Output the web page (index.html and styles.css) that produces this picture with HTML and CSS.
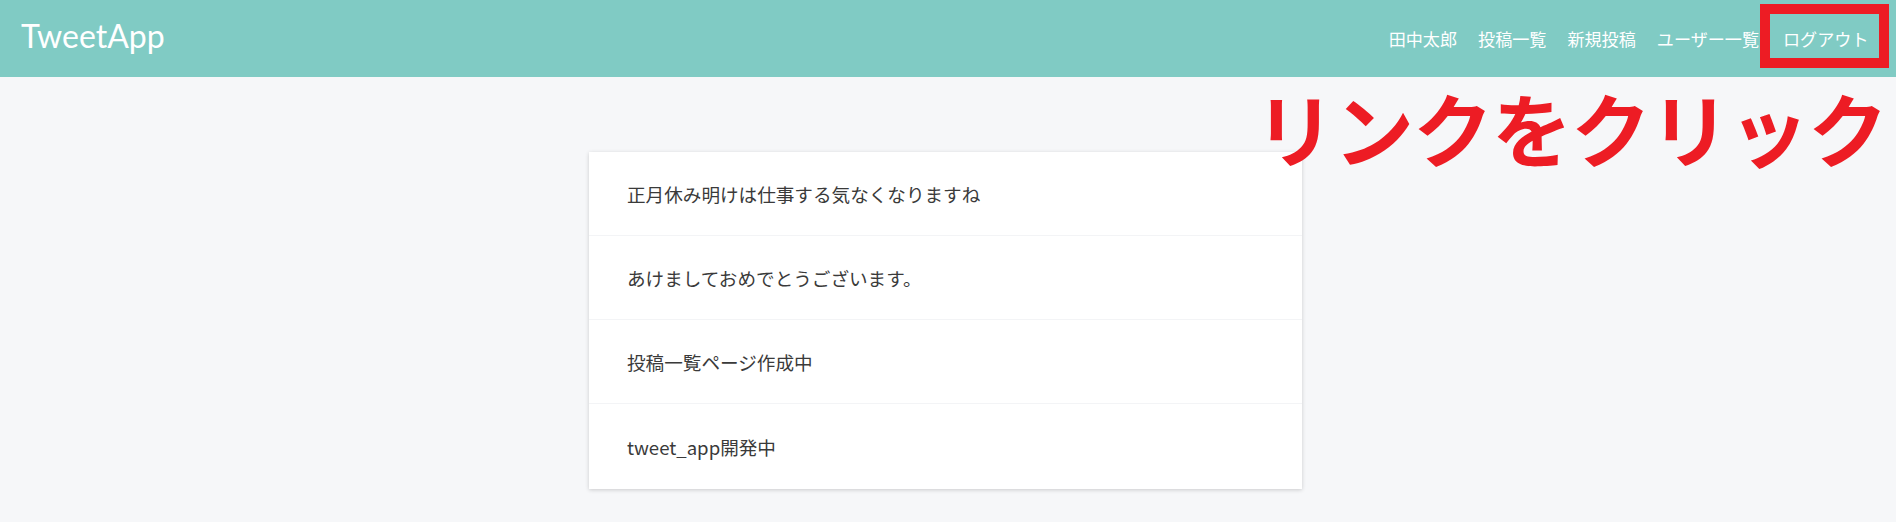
FILE: index.html
```html
<!DOCTYPE html>
<html lang="ja">
<head>
<meta charset="utf-8">
<title>TweetApp</title>
<link rel="stylesheet" href="styles.css">
</head>
<body>
<header class="header">
  <div class="logo">TweetApp</div>
  <nav class="nav">
    <a class="nav-link" href="#">田中太郎</a>
    <a class="nav-link" href="#">投稿一覧</a>
    <a class="nav-link" href="#">新規投稿</a>
    <a class="nav-link" href="#">ユーザー一覧</a>
    <a class="nav-link nav-link-last" href="#">ログアウト</a>
  </nav>
  <div class="highlight-box"></div>
</header>
<main class="main">
  <div class="posts">
    <div class="post">正月休み明けは仕事する気なくなりますね</div>
    <div class="post">あけましておめでとうございます。</div>
    <div class="post">投稿一覧ページ作成中</div>
    <div class="post">tweet_app開発中</div>
  </div>
</main>
<div class="annotation">リンクをクリック</div>
</body>
</html>
```
FILE: styles.css
```css
html, body {
  margin: 0;
  padding: 0;
}
body {
  background: #f6f7f9;
  font-family: "Noto Sans CJK JP", "Noto Sans", sans-serif;
  color: #333;
  width: 1896px;
  height: 522px;
  overflow: hidden;
  position: relative;
}
.header {
  position: relative;
  height: 77px;
  background: #80cbc4;
  display: flex;
  align-items: center;
  justify-content: space-between;
  padding: 0 17px 0 21px;
  box-sizing: border-box;
}
.logo {
  font-family: Lato, "Noto Sans", sans-serif;
  font-size: 32px;
  color: #fff;
  line-height: 1;
  margin-top: -5px;
}
.nav {
  display: flex;
  align-items: center;
}
.nav-link {
  color: #fff;
  text-decoration: none;
  font-size: 17.1px;
  padding: 0 10.5px;
  line-height: 1;
}
.nav-link-last {
  margin-left: 3px;
}
.highlight-box {
  position: absolute;
  right: 7px;
  top: 4px;
  width: 129px;
  height: 64px;
  border: 10px solid #ed1c24;
  box-sizing: border-box;
}
.main {
  padding: 75px 5px 0 0;
}
.posts {
  width: 713px;
  margin: 0 auto;
  background: #fff;
  box-shadow: 0 1px 4px rgba(0, 0, 0, 0.18);
}
.post {
  height: 84px;
  box-sizing: border-box;
  padding: 0 38px;
  display: flex;
  align-items: center;
  font-size: 18.6px;
  color: #3a3a3a;
  border-bottom: 1px solid #f3f4f6;
}
.post:last-child {
  border-bottom: none;
  height: 85px;
}
.annotation {
  position: absolute;
  left: 1255px;
  top: 86px;
  font-size: 80px;
  font-weight: bold;
  letter-spacing: -1px;
  color: #ed1c24;
  line-height: 1;
  white-space: nowrap;
}
```
